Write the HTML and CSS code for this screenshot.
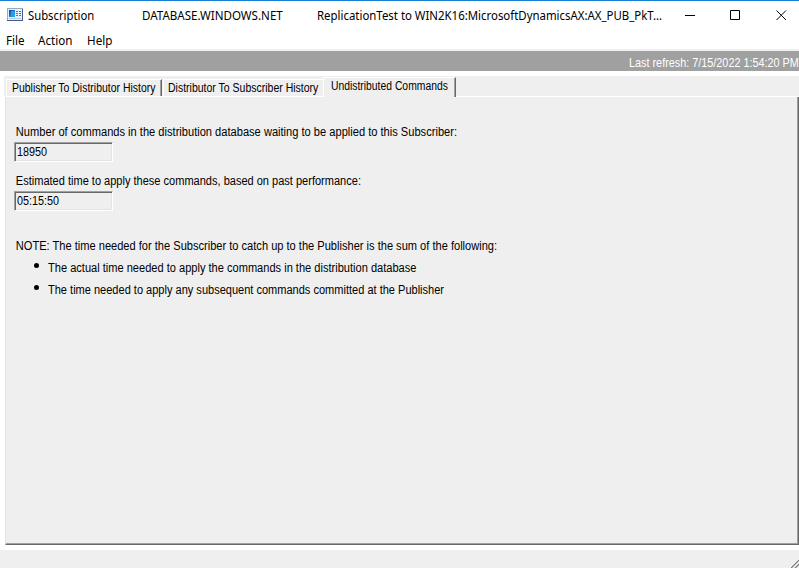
FILE: index.html
```html
<!DOCTYPE html>
<html lang="en">
<head>
<meta charset="utf-8">
<title>Subscription</title>
<link rel="stylesheet" href="styles.css">
</head>
<body>
<div class="window">
  <header class="titlebar">
    <svg class="app-icon" width="16" height="13" viewBox="0 0 16 13">
      <defs><linearGradient id="g" x1="0" y1="0" x2="1" y2="1"><stop offset="0" stop-color="#00409c"/><stop offset="1" stop-color="#35b6ff"/></linearGradient></defs>
      <rect x=".5" y=".5" width="15" height="12" fill="#e9f0f8" stroke="#94a9c6"/>
      <path d="M0 12.500h16M15.500 1v12" stroke="#405f8c"/>
      <rect x="2" y="2" width="6" height="7" fill="url(#g)"/>
      <path d="M4 3h3v5h-3z" fill="#2b9bf0"/>
      <path d="M9 3.500h2M12 3.500h2M9 5.500h2M12 5.500h2M9 7.500h2M12 7.500h2" stroke="#5575a0"/>
      <path d="M2 10.500h12" stroke="#b9cbe2"/>
    </svg>
    <span class="title t-name">Subscription</span>
    <span class="title t-server">DATABASE.WINDOWS.NET</span>
    <span class="title t-pub">ReplicationTest to WIN2K16:MicrosoftDynamicsAX:AX_PUB_PkT...</span>
    <svg class="controls" width="104" height="12" viewBox="0 0 104 12" fill="none" stroke="#000">
      <path d="M0 5.500h10M45.500 .5h9v9h-9zM91.500 .5l9.500 9.500M101 .5l-9.500 9.500"/>
    </svg>
  </header>
  <nav class="menu"><span class="m-file">File</span><span class="m-action">Action</span><span class="m-help">Help</span></nav>
  <div class="refresh"><span class="last">Last refresh: 7/15/2022 1:54:20 PM</span></div>
  <main class="tabs-area">
    <div class="tabs">
      <div class="tab first"><span class="l1">Publisher To Distributor History</span></div>
      <div class="tab second"><span class="l2">Distributor To Subscriber History</span></div>
      <div class="tab active"><span class="l3">Undistributed Commands</span></div>
    </div>
    <section class="panel">
      <p class="p1">Number of commands in the distribution database waiting to be applied to this Subscriber:</p>
      <div class="field"><span class="v1">18950</span></div>
      <p class="p2">Estimated time to apply these commands, based on past performance:</p>
      <div class="field"><span class="v2">05:15:50</span></div>
      <p class="note">NOTE: The time needed for the Subscriber to catch up to the Publisher is the sum of the following:</p>
      <div class="item"><i class="dot"></i><span class="i1">The actual time needed to apply the commands in the distribution database</span></div>
      <div class="item"><i class="dot"></i><span class="i2">The time needed to apply any subsequent commands committed at the Publisher</span></div>
    </section>
  </main>
  <footer class="status">
    <svg width="8" height="8" viewBox="0 0 8 8" fill="none"><path d="M0 8L8 0M4 8L8 4" stroke="#808080" stroke-width="1.500"/><path d="M-1 7.500L7.500 -1M3 7.500L8 2.500" stroke="#fff"/></svg>
  </footer>
</div>
</body>
</html>
```
FILE: styles.css
```css
* { box-sizing: border-box; }
body { margin: 0; background: #fff; color: #000; font: 12px/16px "Liberation Sans", Arial, sans-serif; overflow: hidden; }
p { margin: 0; }
span, p { display: block; white-space: nowrap; transform-origin: 0 0; }
.window { width: 799px; height: 568px; display: flex; flex-direction: column; }
.titlebar { height: 31px; border-top: 1px solid #1580d5; display: flex; align-items: flex-start; padding-left: 7px; flex: none; }
.app-icon { margin-top: 7px; flex: none; }
.title { font: 12px/16px "Noto Sans", sans-serif; margin-top: 7px; flex: none; }
.t-name { width: 114px; margin-left: 5px; transform: scaleX(.94); }
.t-server { width: 175px; transform: scaleX(.965); }
.t-pub { width: 368px; transform: scaleX(.951); }
.controls { margin-top: 9px; flex: none; }
.menu { height: 20px; border-bottom: 2px solid #f0f0f0; display: flex; padding-left: 6px; font: 12px/18px "Noto Sans", sans-serif; flex: none; }
.menu span { margin-top: 1px; transform: scaleX(.97); }
.m-file { width: 32px; }
.m-action { width: 49px; }
.refresh { height: 20px; background: #a0a0a0; color: #fff; display: flex; padding: 4px 0 0 629px; flex: none; }
.last { transform: scaleX(.903); }
.tabs-area { height: 469px; margin: 5px 0 0 4px; background: #efefef; flex: none; display: flex; flex-direction: column; }
.tabs { height: 21px; display: flex; align-items: flex-end; padding-left: 2px; flex: none; background: linear-gradient(#fff, #fff) 0 20px / 320px 1px no-repeat, linear-gradient(#fff, #fff) 452px 20px / 343px 1px no-repeat; }
.tab { height: 17px; border-top: 1px solid #fff; border-left: 1px solid #fff; margin-bottom: 1px; padding-left: 5px; flex: none; }
.tab.first { width: 156px; border-right: 1px solid #696969; box-shadow: inset -1px 0 #a0a0a0; }
.tab.second { width: 161px; margin-left: 1px; padding-left: 4px; }
.tab.active { width: 133px; height: 20px; margin: 0 0 0 -1px; border-right: 1px solid #696969; box-shadow: inset -1px 0 #a0a0a0; padding-left: 7px; line-height: 17px; }
.l1 { transform: scaleX(.872); }
.l2 { transform: scaleX(.875); }
.l3 { transform: scaleX(.863); }
.panel { height: 448px; margin-left: 1px; border: solid; border-width: 0 1px 1px; border-color: #696969 #696969 #696969 #e3e3e3; box-shadow: inset -1px -1px #a0a0a0, -1px 0 #fff; padding: 27px 0 0 8px; }
.panel p { padding-left: 2px; }
.p1 { transform: scaleX(.925); }
.p2 { transform: scaleX(.919); }
.field { width: 99px; height: 20px; margin: 2px 0 11px; border: 1px solid; border-color: #a0a0a0 #fff #fff #a0a0a0; box-shadow: inset 1px 1px #696969, inset -1px -1px #e3e3e3; padding: 1px 0 0 2px; line-height: 17px; }
.v1, .v2 { transform: scaleX(.9); }
.panel .note { margin: 27px 0 6px; transform: scaleX(.923); }
.item { display: flex; margin-bottom: 6px; padding-left: 20px; }
.i1 { transform: scaleX(.922); }
.i2 { transform: scaleX(.919); }
.dot { width: 5px; height: 5px; border-radius: 50%; background: #000; margin: 3px 9px 0 0; }
.status { height: 18px; margin-top: 5px; background: #efefef; display: flex; justify-content: flex-end; align-items: flex-end; flex: none; }
```
